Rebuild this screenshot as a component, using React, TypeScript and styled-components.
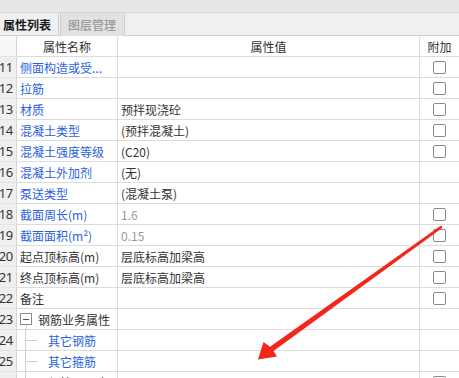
import React from "react";
import styled, { createGlobalStyle } from "styled-components";

const Global = createGlobalStyle`
  html, body { margin: 0; padding: 0; background: #fff; overflow: hidden; }
  body { font-family: "Noto Sans CJK SC", "Noto Sans", sans-serif; }
`;

const Page = styled.div`
  position: relative;
  width: 459px;
  height: 378px;
  overflow: hidden;
  background: #fff;
`;

const TopStrip = styled.div`
  height: 12px;
  background: #e7e7e7;
  border-bottom: 1px solid #d4d4d4;
`;

const TabBar = styled.div`
  display: flex;
  height: 22px;
  background: #f0f0f0;
  border-bottom: 1px solid #d2d2d2;
`;

const Tab = styled.div<{ $active?: boolean }>`
  display: flex;
  align-items: center;
  box-sizing: border-box;
  width: ${(p) => (p.$active ? "59px" : "65px")};
  height: ${(p) => (p.$active ? "22px" : "23px")};
  padding-left: ${(p) => (p.$active ? "3px" : "7px")};
  margin-left: ${(p) => (p.$active ? "0" : "1px")};
  background: ${(p) => (p.$active ? "#f0f0f0" : "#e2e2e2")};
  border-right: 1px solid #cfcfcf;
  border-left: ${(p) => (p.$active ? "none" : "1px solid #cfcfcf")};
  color: ${(p) => (p.$active ? "#1a1a1a" : "#9a9a9a")};
  font-size: 12px;
  font-weight: ${(p) => (p.$active ? 700 : 500)};
  white-space: nowrap;
`;

const Row = styled.div`
  display: flex;
  height: 20px;
  border-bottom: 1px solid #dcdcdc;
`;

const NumCell = styled.div<{ $head?: boolean }>`
  box-sizing: border-box;
  width: 17px;
  flex: none;
  display: flex;
  align-items: center;
  justify-content: flex-end;
  padding-right: 3px;
  border-right: 1px solid #d6d6d6;
  background: ${(p) => (p.$head ? "#f7f7f7" : "#efefef")};
  font-family: "Noto Sans", sans-serif;
  font-size: 13px;
  letter-spacing: -0.3px;
  color: #333;
  overflow: hidden;
  white-space: nowrap;
  margin-bottom: -1px;
  border-bottom: 1px solid #e4e4e4;
  height: 21px;
`;

const Cell = styled.div<{ $w: number; $center?: boolean; $color?: string }>`
  box-sizing: border-box;
  width: ${(p) => p.$w}px;
  flex: none;
  display: flex;
  align-items: center;
  justify-content: ${(p) => (p.$center ? "center" : "flex-start")};
  padding-left: ${(p) => (p.$center ? "0" : "3px")};
  border-right: 1px solid #dcdcdc;
  font-size: 12px;
  color: ${(p) => p.$color || "#333"};
  white-space: nowrap;
  overflow: hidden;
  position: relative;
`;

const LastCell = styled.div`
  flex: 1;
  display: flex;
  align-items: center;
  justify-content: center;
  font-size: 12px;
  color: #333;
`;

const Check = styled.span`
  box-sizing: border-box;
  width: 13px;
  height: 13px;
  border: 1px solid #8a8a8a;
  border-radius: 2px;
  background: #fff;
`;

const Toggle = styled.span`
  position: relative;
  box-sizing: border-box;
  width: 12px;
  height: 12px;
  flex: none;
  border: 1px solid #8c8c8c;
  background: #fff;
  margin-right: 6px;
  display: flex;
  align-items: center;
  justify-content: center;
  align-self: center;
  &::before {
    content: "";
    width: 6px;
    height: 1px;
    background: #555;
  }
  &::after {
    content: "";
    position: absolute;
    left: 5px;
    top: 11px;
    width: 1px;
    height: 10px;
    background: #d0d0d0;
  }
`;

const Branch = styled.span<{ $leaf?: boolean }>`
  position: relative;
  align-self: stretch;
  width: 28px;
  flex: none;
  margin-top: -1px;
  &::before {
    content: "";
    position: absolute;
    left: 5px;
    top: 0;
    bottom: -1px;
    width: 1px;
    background: #d0d0d0;
  }
  &::after {
    content: "";
    display: ${(p) => (p.$leaf ? "block" : "none")};
    position: absolute;
    left: 6px;
    top: 11px;
    width: 11px;
    height: 1px;
    background: #d0d0d0;
  }
`;

const Arrow = styled.svg`
  position: absolute;
  left: 0;
  top: 0;
  pointer-events: none;
`;

type RowData = {
  n: number;
  name: string;
  blue?: boolean;
  value?: string;
  gray?: boolean;
  check?: boolean;
  kind?: "group" | "child";
};

const BLUE = "#2a5fe0";

const rows: RowData[] = [
  { n: 11, name: "侧面构造或受...", blue: true, check: true },
  { n: 12, name: "拉筋", blue: true, check: true },
  { n: 13, name: "材质", blue: true, value: "预拌现浇砼", check: true },
  { n: 14, name: "混凝土类型", blue: true, value: "(预拌混凝土)", check: true },
  { n: 15, name: "混凝土强度等级", blue: true, value: "(C20)", check: true },
  { n: 16, name: "混凝土外加剂", blue: true, value: "(无)" },
  { n: 17, name: "泵送类型", blue: true, value: "(混凝土泵)" },
  { n: 18, name: "截面周长(m)", blue: true, value: "1.6", gray: true, check: true },
  { n: 19, name: "截面面积(m²)", blue: true, value: "0.15", gray: true, check: true },
  { n: 20, name: "起点顶标高(m)", value: "层底标高加梁高", check: true },
  { n: 21, name: "终点顶标高(m)", value: "层底标高加梁高", check: true },
  { n: 22, name: "备注", check: true },
  { n: 23, name: "钢筋业务属性", kind: "group" },
  { n: 24, name: "其它钢筋", blue: true, kind: "child" },
  { n: 25, name: "其它箍筋", blue: true, kind: "child" },
  { n: 26, name: "保护层厚度(mm)", kind: "child", check: true },
];

export default function App() {
  return (
    <Page>
      <Global />
      <TopStrip />
      <TabBar>
        <Tab $active>属性列表</Tab>
        <Tab>图层管理</Tab>
      </TabBar>
      <Row>
        <NumCell $head />
        <Cell $w={101} $center>属性名称</Cell>
        <Cell $w={302} $center>属性值</Cell>
        <LastCell>附加</LastCell>
      </Row>
      {rows.map((r) => (
        <Row key={r.n}>
          <NumCell>{r.n}</NumCell>
          <Cell $w={101} $color={r.blue ? BLUE : "#333"}>
            {r.kind === "group" && <Toggle />}
            {r.kind === "child" && <Branch $leaf={r.n !== 26} />}
            {r.name}
          </Cell>
          <Cell $w={302} $color={r.gray ? "#9a9a9a" : "#333"}>
            {r.value}
          </Cell>
          <LastCell>{r.check && <Check />}</LastCell>
        </Row>
      ))}
      <Arrow width="459" height="378" viewBox="0 0 459 378">
        <polygon
          points="441,225.5 442.5,227.8 273.5,351 277,356.5 258,359.5 263.5,342 270,346.8"
          fill="#f2261b"
        />
      </Arrow>
    </Page>
  );
}
